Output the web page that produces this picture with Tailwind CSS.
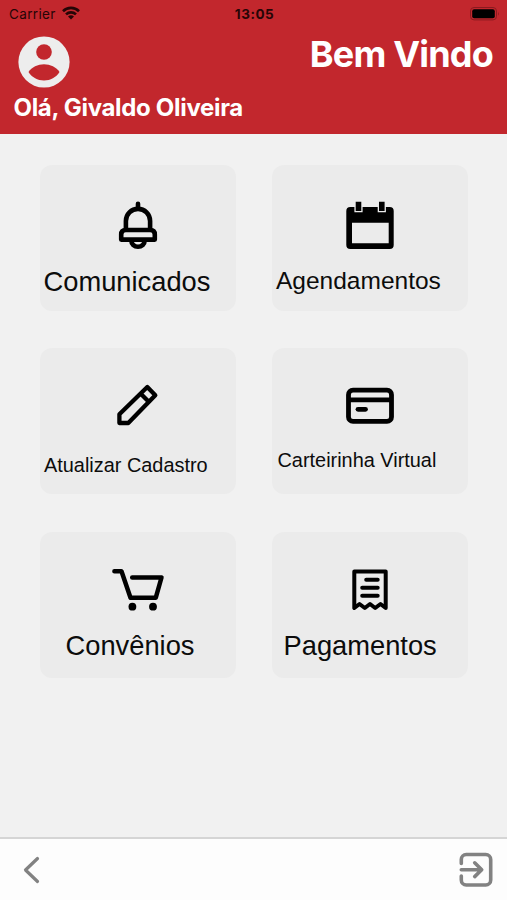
<!DOCTYPE html>
<html lang="pt-BR">
<head>
  <meta charset="UTF-8">
  <meta name="viewport" content="width=device-width, initial-scale=1.0">
  <title>Bem Vindo</title>
  <script src="https://cdn.jsdelivr.net/npm/@tailwindcss/browser@4"></script>
</head>
<body class="bg-[#f1f1f1] h-[900px] overflow-hidden flex flex-col font-['Liberation_Sans',sans-serif]">
  <!-- Header -->
  <header class="h-[134px] shrink-0 bg-[#c2272d] font-['Inter',sans-serif]">
    <div class="h-7 grid grid-cols-3 items-center pl-[9px] pr-[7px] text-[#260506]">
      <div class="flex items-center gap-[6px] text-[13.5px] tracking-[0.35px]">
        <span>Carrier</span>
        <svg class="w-[18px] h-[14px] mb-[2px]" viewBox="0 0 18 14" fill="none" stroke="currentColor" stroke-width="2.6">
          <path d="M1 5.2a11.4 11.4 0 0 1 16 0M4 8.4a7.2 7.2 0 0 1 10 0"></path>
          <path d="M9 13.6L6 10.6a4.3 4.3 0 0 1 6 0z" fill="currentColor" stroke="none"></path>
        </svg>
      </div>
      <div class="text-center text-[13.5px] font-bold tracking-[0.5px]">13:05</div>
      <svg class="justify-self-end w-[30px] h-[14px] mb-px" viewBox="0 0 30 14">
        <rect x="0.5" y="0.5" width="26" height="12.4" rx="3.5" fill="none" stroke="#8a1a1f"></rect>
        <rect x="2.2" y="2.2" width="22.6" height="9" rx="2" fill="#000"></rect>
        <path d="M28 4.8q1.6 2 0 4z" fill="#8a1a1f"></path>
      </svg>
    </div>
    <div class="flex justify-between pl-[18px] pr-[14px] h-[66px]">
      <svg class="w-[52px] h-[52px] mt-2" viewBox="0 0 52 52">
        <circle cx="26" cy="26" r="25.6" fill="#ededed"></circle>
        <circle cx="26" cy="16" r="7.8" fill="#c2272d"></circle>
        <path d="M10.5 36C13.5 31 20 28.2 26 28.2S38.5 31 41.5 36C38 41.5 32.5 44.5 26 44.5S14 41.5 10.5 36z" fill="#c2272d"></path>
      </svg>
      <h1 class="mt-[8px] text-[36px] leading-[36px] font-bold text-white tracking-[-0.8px]">Bem Vindo</h1>
    </div>
    <p class="pl-[13.5px] text-[24px] leading-[28px] font-bold text-white tracking-[-0.32px] whitespace-nowrap">Olá, Givaldo Oliveira</p>
  </header>

  <!-- Menu -->
  <main class="flex-1 pt-[31px] pl-[40px]">
    <div class="grid grid-cols-[196px_196px] grid-rows-[146px_147px_146px] gap-x-9 gap-y-[37px] text-[#0c0c0c] whitespace-nowrap">
      <div class="bg-[#ebebeb] rounded-xl pt-[30px]">
        <svg class="w-[60px] h-[60px] mx-auto" viewBox="0 0 60 60" fill="none" stroke="#000" stroke-width="4.6" stroke-linejoin="round" stroke-linecap="round">
          <path d="M30 8.8V13M17.9 34V26a12.1 12.1 0 0 1 24.2 0V34"></path>
          <path d="M13.2 44.6V39.5q0-4.5 4.5-4.5h24.6q4.5 0 4.5 4.5v5.1z"></path>
          <path d="M23.3 45.5a6.7 6.3 0 0 0 13.4 0"></path>
        </svg>
        <p class="mt-[13px] pl-[3.5px] text-[27.3px] leading-none">Comunicados</p>
      </div>

      <div class="bg-[#ebebeb] rounded-xl pt-[30px]">
        <svg class="w-[60px] h-[60px] mx-auto" viewBox="0 0 60 60">
          <path fill-rule="evenodd" d="M10.3 12h39.4a4 4 0 0 1 4 4v34a4 4 0 0 1-4 4h-39.4a4 4 0 0 1-4-4v-34a4 4 0 0 1 4-4zM12 27.7v20.6h36.7v-20.6z"></path>
          <path d="M14.4 6v11.3h8.2V6zM37.7 6v11.3h8.2V6z" fill="#ebebeb"></path>
          <path d="M15.7 6.7v9.3h5.6V6.7zM39 6.7v9.3h5.6V6.7z"></path>
        </svg>
        <p class="mt-[14px] pl-[4px] text-[24.5px] leading-none">Agendamentos</p>
      </div>

      <div class="h-[146px] bg-[#ebebeb] rounded-xl pt-[30px]">
        <svg class="w-[60px] h-[60px] mx-auto" viewBox="0 0 60 60" fill="none" stroke="#000" stroke-width="4.3" stroke-linejoin="round">
          <path d="M11.4 45V36.3L39.3 9l8 8.2L20.3 45zM32.5 15.5l8 8"></path>
        </svg>
        <p class="mt-[18px] pl-[4px] text-[19.9px] leading-none">Atualizar Cadastro</p>
      </div>

      <div class="h-[146px] bg-[#ebebeb] rounded-xl pt-[30px]">
        <svg class="w-[60px] h-[60px] mx-auto" viewBox="0 0 60 60" fill="none" stroke="#000" stroke-width="4.8">
          <rect x="8.5" y="12.2" width="43" height="31.2" rx="4.5"></rect>
          <path d="M8.5 21.8h43"></path>
          <path d="M18 31.3h7.5" stroke-linecap="round"></path>
        </svg>
        <p class="mt-[13px] pl-[5.5px] text-[19.9px] leading-none">Carteirinha Virtual</p>
      </div>

      <div class="bg-[#ebebeb] rounded-xl pt-[30px]">
        <svg class="w-[60px] h-[60px] mx-auto" viewBox="0 0 60 60" fill="none" stroke="#000" stroke-width="4.5" stroke-linejoin="round" stroke-linecap="round">
          <path d="M6.4 9.2H13.5L22.5 35.7H47.8L53.5 15.5H24.2"></path>
          <circle cx="24.4" cy="44.7" r="3.9" fill="#000" stroke="none"></circle>
          <circle cx="45" cy="44.7" r="3.9" fill="#000" stroke="none"></circle>
        </svg>
        <p class="mt-[10px] pl-[25.5px] text-[27.3px] leading-none">Convênios</p>
      </div>

      <div class="bg-[#ebebeb] rounded-xl pt-[30px]">
        <svg class="w-[60px] h-[60px] mx-auto" viewBox="0 0 60 60" fill="none" stroke="#000" stroke-width="4" stroke-linejoin="round" stroke-linecap="round">
          <path d="M14.3 46V9.5H45.7V46L40.5 42L35.2 46L30 42L24.8 46L19.5 42z"></path>
          <path d="M26.2 17.7h11.5M22.2 25.7h15.5M22.2 33.7h15.5"></path>
        </svg>
        <p class="mt-[10px] pl-[11.5px] text-[27.3px] leading-none">Pagamentos</p>
      </div>
    </div>
  </main>

  <!-- Bottom bar -->
  <footer class="h-[63px] shrink-0 bg-[#fdfdfd] border-t-2 border-[#d5d5d5] flex items-center justify-between pl-[20px] pr-[13px]">
    <svg class="w-6 h-[34px]" viewBox="0 0 24 34" fill="none" stroke="#828282" stroke-width="3.2" stroke-linecap="round" stroke-linejoin="round">
      <path d="M17.5 5.5L5.5 17L17.5 28.5"></path>
    </svg>
    <svg class="w-9 h-9" viewBox="0 0 36 36" fill="none" stroke="#828282" stroke-width="3.6" stroke-linecap="round" stroke-linejoin="round">
      <path d="M3.3 11.5V7.5a5 5 0 0 1 5-5h19.4a5 5 0 0 1 5 5v20.5a5 5 0 0 1-5 5h-19.4a5 5 0 0 1-5-5v-4"></path>
      <path d="M3.3 17.7H22.5M16.7 10.8L23.7 17.7L16.7 24.6"></path>
    </svg>
  </footer>
</body>
</html>
